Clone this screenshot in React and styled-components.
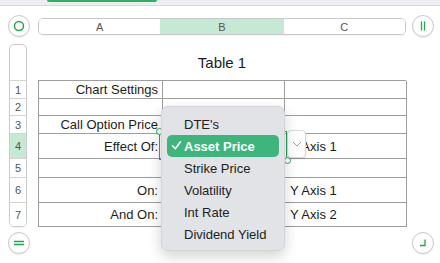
import React from 'react'
import styled, {createGlobalStyle} from 'styled-components'

const GlobalStyle = createGlobalStyle`
  html, body {
    margin: 0;
    padding: 0;
    background: #ffffff;
  }
  body {
    font-family: "Liberation Sans", Arial, sans-serif;
    color: #1c1c1c;
  }
`

const rows = [
  {n: 1, h: 18, a: 'Chart Settings', c: ''},
  {n: 2, h: 17, a: '', c: ''},
  {n: 3, h: 18, a: 'Call Option Price', c: ''},
  {n: 4, h: 25, a: 'Effect Of:', c: 'Y Axis 1', active: true},
  {n: 5, h: 19, a: '', c: ''},
  {n: 6, h: 25, a: 'On:', c: 'Y Axis 1'},
  {n: 7, h: 24, a: 'And On:', c: 'Y Axis 2'},
]

const menuItems = ["DTE's", 'Asset Price', 'Strike Price', 'Volatility', 'Int Rate', 'Dividend Yield']

const Page = styled.div`
  width: 440px;
  height: 263px;
  overflow: hidden;
  position: relative;
`

const TopStrip = styled.div`
  height: 5px;
  background: #eceef1;
  border-bottom: 1px solid #d6d9dc;
  display: flex;
`

const TabMark = styled.div`
  margin-left: 47px;
  width: 110px;
  height: 2px;
  background: #2fb260;
  border-radius: 0 0 3px 3px;
`

const Sheet = styled.div`
  display: grid;
  grid-template-columns: 38px 368px 34px;
  grid-template-rows: 17px 45px auto 1fr;
  margin-top: 12px;
`

const RoundButton = styled.div`
  width: 22px;
  height: 22px;
  box-sizing: border-box;
  border: 1px solid #c9c9c9;
  border-radius: 50%;
  background: #fff;
  box-shadow: 0 1px 1px rgba(0, 0, 0, 0.06);
  display: flex;
  align-items: center;
  justify-content: center;
  margin-left: ${p => p.$left}px;
  margin-top: ${p => p.$top}px;
  align-self: start;
`

const ColumnBar = styled.div`
  display: flex;
  height: 17px;
  box-sizing: border-box;
  border: 1px solid #c9c9c9;
  border-radius: 5px;
  overflow: hidden;
  box-shadow: 0 1px 1px rgba(0, 0, 0, 0.05);
`

const ColumnCell = styled.div`
  flex: 1;
  display: flex;
  align-items: center;
  justify-content: center;
  font-size: 11px;
  color: #555;
  background: ${p => (p.$active ? '#c6e9d5' : '#fff')};
  & + & {
    border-left: 1px solid ${p => (p.$active ? '#c6e9d5' : '#d4d4d4')};
  }
`

const Title = styled.div`
  grid-column: 2;
  align-self: end;
  text-align: center;
  font-size: 15px;
  padding-bottom: 9px;
`

const RowHeader = styled.div`
  grid-column: 1;
  grid-row: 2 / span 2;
  margin: 9px 0 0 9px;
  width: 18px;
  box-sizing: border-box;
  border: 1px solid #cacaca;
  border-radius: 5px;
  overflow: hidden;
  display: flex;
  flex-direction: column;
  align-self: start;
  box-shadow: 0 1px 1px rgba(0, 0, 0, 0.05);
`

const RowHeaderTop = styled.div`
  height: 35px;
`

const RowNumber = styled.div`
  height: ${p => p.$h}px;
  box-sizing: border-box;
  border-top: 1px solid #d4d4d4;
  display: flex;
  align-items: center;
  justify-content: center;
  font-size: 11px;
  color: #555;
  background: ${p => (p.$active ? '#c6e9d5' : '#fff')};
`

const TableWrap = styled.div`
  grid-column: 2;
  grid-row: 3;
  position: relative;
`

const Table = styled.div`
  display: grid;
  grid-template-columns: 124px 122px 122px;
  border-left: 1px solid #9d9d9d;
  border-top: 1px solid #9d9d9d;
`

const Cell = styled.div`
  height: ${p => p.$h - 1}px;
  border-right: 1px solid #9d9d9d;
  border-bottom: 1px solid #9d9d9d;
  display: flex;
  align-items: center;
  justify-content: ${p => (p.$right ? 'flex-end' : 'flex-start')};
  padding: ${p => (p.$right ? '0 4px 0 0' : '0 0 0 5px')};
  font-size: 13px;
  white-space: nowrap;
  overflow: hidden;
`

const Selection = styled.div`
  position: absolute;
  left: 121px;
  top: 51px;
  width: 126px;
  height: 27px;
  border: 1.5px solid #2bab5f;
`

const Handle = styled.div`
  position: absolute;
  width: 5px;
  height: 5px;
  border-radius: 50%;
  border: 1px solid #2bab5f;
  background: #fff;
  left: ${p => p.$x - 3.5}px;
  top: ${p => p.$y - 3.5}px;
`

const PopupButton = styled.div`
  position: absolute;
  left: 249px;
  top: 50px;
  width: 19px;
  height: 28px;
  box-sizing: border-box;
  background: #fff;
  border: 1px solid #d9d9d9;
  border-radius: 4px;
  box-shadow: 0 1px 2px rgba(0, 0, 0, 0.12);
  display: flex;
  align-items: center;
  justify-content: center;
`

const Menu = styled.div`
  position: absolute;
  left: 123px;
  top: 26px;
  width: 124px;
  box-sizing: border-box;
  padding: 6px 5px 5px;
  background: #e1e3e7;
  border: 1px solid #d2d4d8;
  border-radius: 7px;
  box-shadow: 0 5px 14px rgba(0, 0, 0, 0.18);
  z-index: 3;
`

const MenuItem = styled.div`
  height: 22px;
  display: flex;
  align-items: center;
  padding-left: 17px;
  position: relative;
  border-radius: 5px;
  font-size: 13px;
  color: ${p => (p.$selected ? '#fff' : '#222')};
  background: ${p => (p.$selected ? '#3db57c' : 'transparent')};
  font-weight: ${p => (p.$selected ? 600 : 400)};
`

const Check = styled.span`
  position: absolute;
  left: 4px;
  top: 5px;
  display: flex;
`

const BottomLeft = styled(RoundButton)`
  grid-column: 1;
  grid-row: 4;
`

const BottomRight = styled(RoundButton)`
  grid-column: 3;
  grid-row: 4;
`

export default function App() {
  return (
    <Page>
      <GlobalStyle />
      <TopStrip>
        <TabMark />
      </TopStrip>
      <Sheet>
        <RoundButton $left={8} $top={-3}>
          <svg width="12" height="12" viewBox="0 0 12 12">
            <circle cx="6" cy="6" r="4.5" fill="none" stroke="#1fa850" strokeWidth="1.5" />
          </svg>
        </RoundButton>
        <ColumnBar>
          <ColumnCell>A</ColumnCell>
          <ColumnCell $active>B</ColumnCell>
          <ColumnCell>C</ColumnCell>
        </ColumnBar>
        <RoundButton $left={6} $top={-3}>
          <svg width="10" height="12" viewBox="0 0 10 12">
            <path d="M3.5 1.5v9M6.5 1.5v9" stroke="#1fa850" strokeWidth="1.3" />
          </svg>
        </RoundButton>

        <Title>Table 1</Title>

        <RowHeader>
          <RowHeaderTop />
          {rows.map(r => (
            <RowNumber key={r.n} $h={r.h} $active={r.active}>{r.n}</RowNumber>
          ))}
        </RowHeader>

        <TableWrap>
          <Table>
            {rows.map(r => (
              <React.Fragment key={r.n}>
                <Cell $h={r.h} $right>{r.a}</Cell>
                <Cell $h={r.h} />
                <Cell $h={r.h}>{r.c}</Cell>
              </React.Fragment>
            ))}
          </Table>
          <Selection />
          <Handle $x={121} $y={51} />
          <Handle $x={249} $y={80} />
          <PopupButton>
            <svg width="10" height="6" viewBox="0 0 10 6">
              <path d="M1 1l4 4 4-4" fill="none" stroke="#9a9a9a" strokeWidth="1" />
            </svg>
          </PopupButton>
          <Menu>
            {menuItems.map(item => (
              <MenuItem key={item} $selected={item === 'Asset Price'}>
                {item === 'Asset Price' && (
                  <Check>
                    <svg width="11" height="11" viewBox="0 0 11 11">
                      <path d="M1.5 5.8l2.8 3L9.5 1.8" fill="none" stroke="#fff" strokeWidth="1.6" strokeLinecap="round" strokeLinejoin="round" />
                    </svg>
                  </Check>
                )}
                {item}
              </MenuItem>
            ))}
          </Menu>
        </TableWrap>

        <BottomLeft $left={8} $top={5}>
          <svg width="12" height="10" viewBox="0 0 12 10">
            <path d="M1 3.5h10M1 6.5h10" stroke="#1fa850" strokeWidth="1.3" />
          </svg>
        </BottomLeft>
        <BottomRight $left={6} $top={5}>
          <svg width="12" height="12" viewBox="0 0 12 12">
            <path d="M8 2.5v6H3" fill="none" stroke="#1fa850" strokeWidth="1.3" />
          </svg>
        </BottomRight>
      </Sheet>
    </Page>
  )
}
